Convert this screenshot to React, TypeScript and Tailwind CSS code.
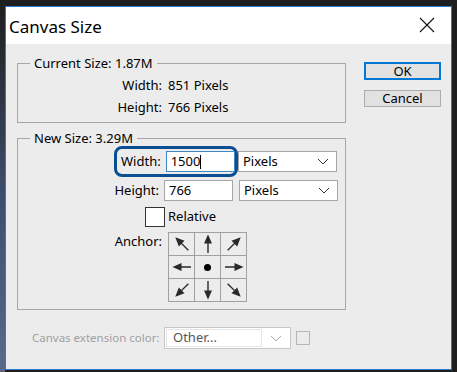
import React from "react";

const font = { fontFamily: '"Noto Sans", "Open Sans", sans-serif' };

function Chevron({ color = "#333" }: { color?: string }) {
  return (
    <svg width="12" height="7" viewBox="0 0 12 7">
      <path d="M1 1 L6 6 L11 1" fill="none" stroke={color} strokeWidth="1" />
    </svg>
  );
}

function Arrow({ rot }: { rot: number }) {
  // arrow pointing up, rotated
  return (
    <svg width="20" height="20" viewBox="0 0 20 20" style={{ transform: `rotate(${rot}deg)` }}>
      <line x1="10" y1="19" x2="10" y2="7" stroke="#2a2a2a" strokeWidth="1.4" />
      <path d="M10 0.5 L14 9.5 L6 9.5 Z" fill="#2a2a2a" />
    </svg>
  );
}

function AnchorGrid() {
  const cells = [-45, 0, 45, -90, null, 90, -135, 180, 135];
  return (
    <div className="grid grid-cols-[repeat(3,26px)] grid-rows-[repeat(3,23px)] border-l border-t border-[#a0a0a0]">
      {cells.map((r, i) => (
        <div key={i} className="flex items-center justify-center border-r border-b border-[#a0a0a0]">
          {r === null ? <div className="w-[7px] h-[7px] rounded-full bg-black" /> : <Arrow rot={r} />}
        </div>
      ))}
    </div>
  );
}

export default function App() {
  return (
    <div className="w-[457px] h-[372px] bg-[#1e1e1e] flex overflow-hidden" style={font}>
      <div className="w-[5px] h-full bg-gradient-to-b from-[#1e1e1e] via-[#3d4c6a] to-[#5a6a88]" />
      <div className="mt-[6px] w-[447px] h-[364px] border border-[#2a7ad4] flex flex-col bg-[#ececec]">
        <div className="h-[37px] bg-white flex items-center justify-between pl-[3px] pr-[16px]">
          <span className="text-[17px] text-black leading-none mt-[2px]">Canvas Size</span>
          <svg width="16" height="16" viewBox="0 0 16 16" className="-mt-[2px]">
            <path d="M1 1 L15 15 M15 1 L1 15" stroke="#111" strokeWidth="1.1" />
          </svg>
        </div>
        <div className="flex flex-1 text-[13px] text-black">
          <div className="pl-[11px] pt-[11px] w-[340px] flex flex-col">
            <fieldset className="border border-[#a6a6a6] w-[329px] h-[68px] px-0">
              <legend className="ml-[12px] px-[4px] leading-[16px]">Current Size: 1.87M</legend>
              <div className="mt-[6px] flex flex-col gap-[6px]">
                <div className="flex leading-[16px]">
                  <span className="w-[144px] text-right">Width:</span>
                  <span className="ml-[6px]">851 Pixels</span>
                </div>
                <div className="flex leading-[16px]">
                  <span className="w-[144px] text-right">Height:</span>
                  <span className="ml-[6px]">766 Pixels</span>
                </div>
              </div>
            </fieldset>
            <fieldset className="mt-[7px] border border-[#a6a6a6] w-[329px] h-[180px] px-0">
              <legend className="ml-[12px] px-[4px] leading-[16px]">New Size: 3.29M</legend>
              <div className="mt-0 flex items-center">
                <div className="ml-[96px] w-[124px] h-[31px] rounded-[8px] border-[3px] border-[#0b4f93] flex items-center">
                  <span className="ml-[4px] w-[40px] text-right">Width:</span>
                  <div className="ml-[5px] w-[70px] h-[21px] border border-[#3f87c7] bg-white flex items-center pl-[4px]">
                    1500<span className="w-px h-[14px] bg-black" />
                  </div>
                </div>
                <div className="w-[99px] h-[21px] border border-[#a6a6a6] bg-white flex items-center justify-between pl-[4px] pr-[7px]">
                  <span>Pixels</span>
                  <Chevron />
                </div>
              </div>
              <div className="mt-[3px] flex items-center">
                <span className="w-[141px] text-right">Height:</span>
                <div className="ml-[5px] w-[69px] h-[21px] border border-[#a6a6a6] bg-white flex items-center pl-[4px]">766</div>
                <div className="ml-[6px] w-[99px] h-[21px] border border-[#a6a6a6] bg-white flex items-center justify-between pl-[4px] pr-[7px]">
                  <span>Pixels</span>
                  <Chevron />
                </div>
              </div>
              <div className="mt-[6px] flex items-center">
                <div className="ml-[127px] w-[20px] h-[20px] border border-[#333] bg-white" />
                <span className="ml-[3px]">Relative</span>
              </div>
              <div className="mt-[5px] flex items-start">
                <span className="w-[144px] text-right">Anchor:</span>
                <div className="ml-[6px]">
                  <AnchorGrid />
                </div>
              </div>
            </fieldset>
            <div className="mt-[17px] flex items-center">
              <span className="ml-[15px] text-[#a0a0a0] text-[11.5px] w-[132px] shrink-0 whitespace-nowrap">Canvas extension color:</span>
              <div className="w-[127px] h-[22px] shrink-0 border border-[#c8c8c8] bg-white flex items-center">
                <div className="ml-[1px] w-[96px] h-[18px] border border-[#e6e6e6] flex items-center pl-[6px] text-[#555]">Other...</div>
                <div className="flex-1 flex justify-center">
                  <Chevron color="#aaa" />
                </div>
              </div>
              <div className="ml-[5px] w-[14px] h-[14px] shrink-0 border border-[#b5b5b5]" />
            </div>
          </div>
          <div className="pt-[18px] ml-[18px] flex flex-col gap-[10px]">
            <div className="w-[77px] h-[18px] border-2 border-[#0078d7] bg-[#e1e1e1] flex items-center justify-center leading-none">OK</div>
            <div className="w-[77px] h-[17px] border border-[#adadad] bg-[#e1e1e1] flex items-center justify-center leading-none">Cancel</div>
          </div>
        </div>
      </div>
      <div className="flex-1" />
    </div>
  );
}
